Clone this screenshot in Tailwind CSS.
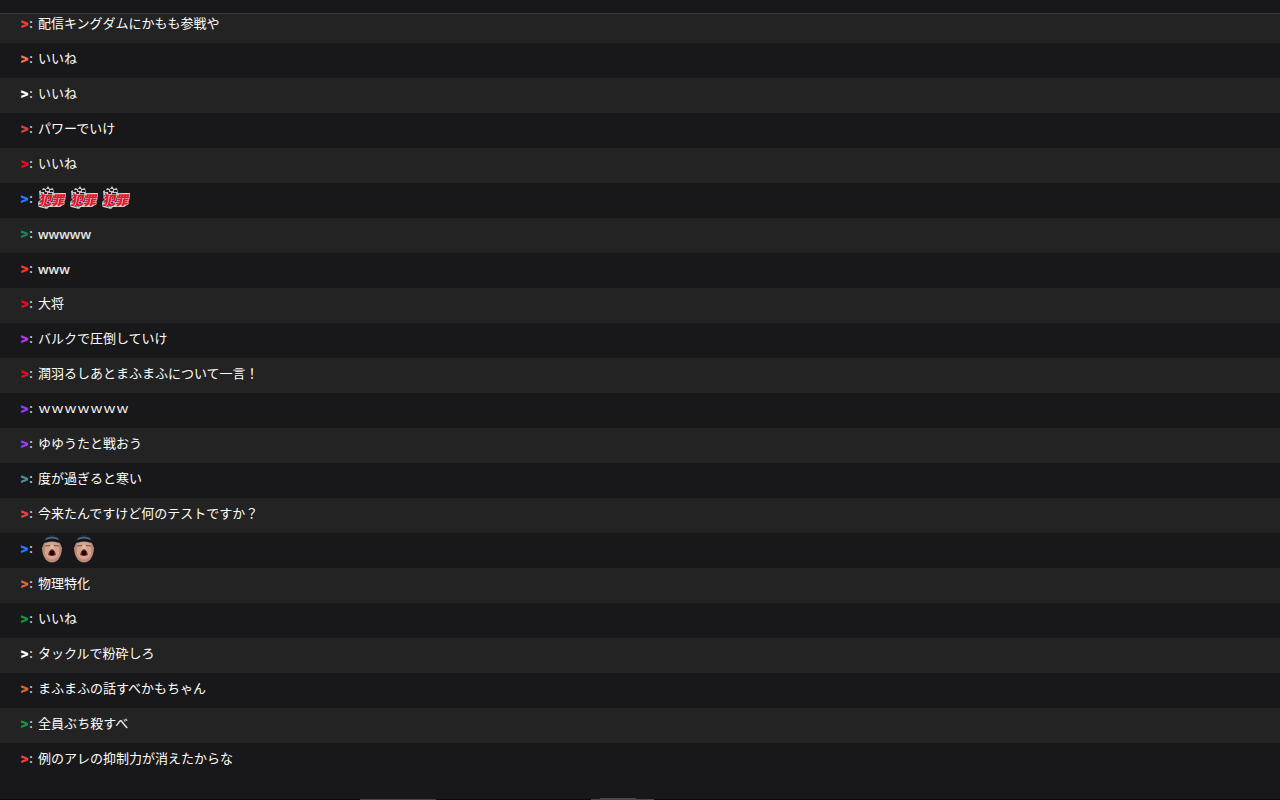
<!DOCTYPE html>
<html lang="ja">
<head>
    <meta charset="UTF-8">
    <meta name="viewport" content="width=device-width, initial-scale=1.0">
    <title>Chat</title>
    <script src="https://cdn.jsdelivr.net/npm/@tailwindcss/browser@4"></script>
</head>
<body class="bg-[#18181a] text-white text-[13px] leading-5 font-['DejaVu_Sans','Noto_Sans_CJK_JP',sans-serif]">

    <!-- emotes -->
    <svg class="hidden">
        <symbol id="hanzai" viewBox="0 0 28 28">
            <path d="M1 6 4 5 5 3 8 4 10 1 12 4 15 3 16 8 28 8 27 12 25 20 22 22 11 22 9 24 1 22 0 18 2 15Z" fill="#c8c8c8"/>
            <path d="M3 6H7M8 5H11M12 6H15M3 9H5M6 8H9M10 9H14" stroke="#222" stroke-width="2"/>
            <path d="M2 10 27 9 24 20 12 20 9 22 2 21Z" fill="#222"/>
            <path d="M2 12 15 11M15 10 26 9M1 20 10 19M14 18 24 17" stroke="#eee" stroke-width="1"/>
            <text x="0" y="20" font-size="13" font-weight="900" font-style="italic" fill="#e8102c" stroke="#f2f2f2" stroke-width="0.800" paint-order="stroke">犯罪</text>
        </symbol>
        <symbol id="face" viewBox="0 0 28 28">
            <path d="M4 12Q4 1 14 0Q24 1 24 12Q24 20 20 25Q14 30 8 25Q4 20 4 12Z" fill="#b98a76"/>
            <path d="M7 9Q14 4 21 9L21 20Q14 29 7 20Z" fill="#d3a48e"/>
            <path d="M4 13Q2 1 14 0Q26 1 24 13L22 8Q14 5 6 8Z" fill="#15191e"/>
            <path d="M8 3Q14 0 20 3L21 5Q14 2 7 5Z" fill="#526576"/>
            <path d="M7 11 12 10.500M16 10.500 21 11" stroke="#765044" stroke-width="1"/>
            <path d="M13 10 12 14H16L15 10" fill="#e5baa2"/>
            <path d="M14 14Q17 15 18 20Q14 22 10 20Q11 15 14 14Z" fill="#8a3034"/>
            <ellipse cx="14" cy="18" rx="2.500" ry="2.500" fill="#1c070a"/>
        </symbol>
    </svg>

    <div class="flex flex-col h-screen overflow-hidden">
        <header class="h-[14px] shrink-0 border-b border-[#3a3a3d]"></header>

        <main class="flex-1 min-h-0 overflow-hidden">
            <ul id="chat" class="-mt-[6px]"></ul>
        </main>

        <footer class="relative h-px shrink-0 bg-[#12090f]">
            <div class="absolute left-[360px] bottom-0 w-[76px] h-px bg-[#49494b]"></div>
            <div class="absolute left-[591px] bottom-0 w-[63px] h-px bg-[#49494b]"></div>
            <div class="absolute left-[600px] bottom-0 w-9 h-[2px] bg-[#49494b]"></div>
        </footer>
    </div>

    <script>
        const messages = [
            ['#ff3b30', '配信キングダムにかもも参戦や'],
            ['#ff7050', 'いいね'],
            ['#ffffff', 'いいね'],
            ['#e04040', 'パワーでいけ'],
            ['#ff0020', 'いいね'],
            ['#1e80ff', '', 'hanzai', 3],
            ['#108a58', 'wwwww'],
            ['#ff3820', 'www'],
            ['#ff0020', '大将'],
            ['#b935ff', 'バルクで圧倒していけ'],
            ['#ff0020', '潤羽るしあとまふまふについて一言！'],
            ['#9540ff', 'ｗｗｗｗｗｗｗ'],
            ['#9540ff', 'ゆゆうたと戦おう'],
            ['#4a9499', '度が過ぎると寒い'],
            ['#e54545', '今来たんですけど何のテストですか？'],
            ['#1e80ff', '', 'face', 2],
            ['#e06530', '物理特化'],
            ['#109a38', 'いいね'],
            ['#ffffff', 'タックルで粉砕しろ'],
            ['#e06530', 'まふまふの話すべかもちゃん'],
            ['#109a38', '全員ぶち殺すべ'],
            ['#f04040', '例のアレの抑制力が消えたからな']
        ];

        // latin-only messages use a heavier face
        const textFont = text => /^[a-z]+$/.test(text) ? "font-['Open_Sans',sans-serif] font-semibold text-[#e8e8e8]" : '';

        document.getElementById('chat').innerHTML = messages.map(([color, text, emote, count]) => `
            <li class="flex h-[35px] px-5 pt-[5px] odd:bg-[#232323]">
                <div class="w-[18px] shrink-0 font-['Inter',sans-serif]"><span class="font-black" style="color: ${color}">&gt;</span><span class="font-medium">:</span></div>
                ${emote
                    ? `<div class="flex gap-1 -mt-[3px]">${`<svg class="size-7"><use href="#${emote}"/></svg>`.repeat(count)}</div>`
                    : `<p class="leading-[22px] ${textFont(text)}">${text}</p>`}
            </li>`).join('');
    </script>

</body>
</html>
